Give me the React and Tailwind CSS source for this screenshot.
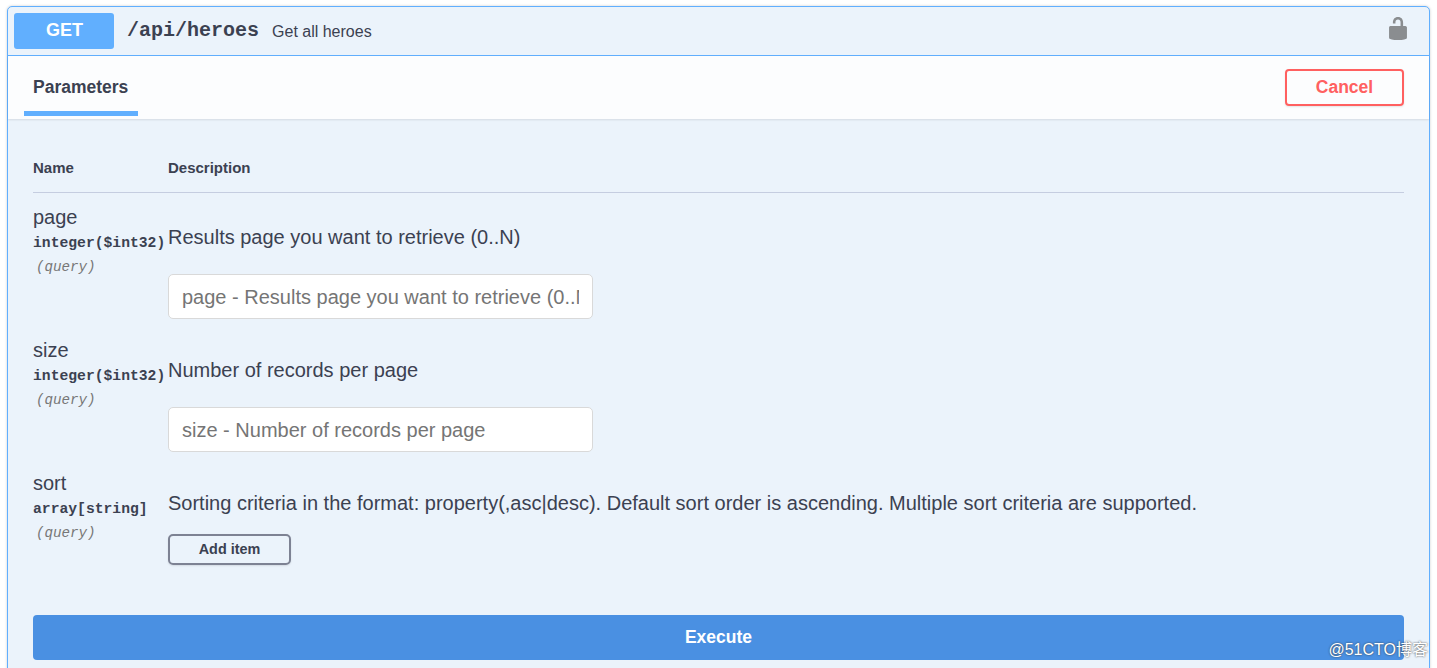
const sans = 'font-["Liberation_Sans",Arial,sans-serif]'

const params = [
  {
    name: 'page',
    type: 'integer($int32)',
    description: 'Results page you want to retrieve (0..N)',
    placeholder: 'page - Results page you want to retrieve (0..N)',
  },
  {
    name: 'size',
    type: 'integer($int32)',
    description: 'Number of records per page',
    placeholder: 'size - Number of records per page',
  },
  {
    name: 'sort',
    type: 'array[string]',
    description:
      'Sorting criteria in the format: property(,asc|desc). Default sort order is ascending. Multiple sort criteria are supported.',
  },
]

function LockIcon() {
  return (
    <svg viewBox="3 1 14 18" className="block h-[23px] w-[18px] fill-[#8a8d90]">
      <path d="M15.8 8H14V5.6C14 2.703 12.665 1 10 1 7.334 1 6 2.703 6 5.6V6h2v-.801C8 3.754 8.797 3 10 3c1.203 0 2 .754 2 2.199V8H4c-.553 0-1 .646-1 1.199V17c0 .549.428 1.139.951 1.307l1.197.387C5.672 18.861 6.55 19 7.1 19h5.8c.549 0 1.428-.139 1.951-.307l1.196-.387c.524-.167.953-.757.953-1.306V9.199C17 8.646 16.352 8 15.8 8z" />
    </svg>
  )
}

function ParamRow({ param }) {
  return (
    <div className="flex h-[133px] items-start">
      <div className="w-[135px] shrink-0 pt-[13px]">
        <p className="text-[20px] leading-[23px] text-[#3b4151]">{param.name}</p>
        <p className="mt-[6px] font-['Liberation_Mono',monospace] text-[14.7px] leading-[16px] font-bold whitespace-nowrap text-[#3b4151]">
          {param.type}
        </p>
        <p className="mt-[8px] pl-[3px] font-['Liberation_Mono',monospace] text-[14.2px] leading-[16px] font-normal text-[#777] italic">
          (query)
        </p>
      </div>
      <div className="min-w-0 flex-1 pt-[33px]">
        <p className="text-[20px] leading-[23px] whitespace-nowrap text-[#3b4151]">{param.description}</p>
        {param.placeholder ? (
          <input
            className="mt-[25px] block h-[45px] w-[425px] rounded-[5px] border border-[#d9d9d9] bg-white px-[13px] pt-[2px] text-[20px] outline-none placeholder:text-[#757575]"
            placeholder={param.placeholder}
          />
        ) : (
          <button className="mt-[19px] block h-[31px] w-[123px] rounded-[5px] border-2 border-[#7d8293] pt-[1px] text-[14.4px] font-bold text-[#3b4151] shadow-[0_1px_2px_rgba(0,0,0,0.1)]">
            Add item
          </button>
        )}
      </div>
    </div>
  )
}

export default function App() {
  return (
    <div className={`relative h-[668px] overflow-hidden bg-white pt-[6px] pr-[7px] pl-[7px] ${sans}`}>
      <div className="h-[700px] rounded-[5px] border border-[#61affe] bg-[#ebf3fb] shadow-[0_0_3px_rgba(0,0,0,0.19)]">
        <div className="flex h-[49px] items-center border-b border-[#61affe] pr-[22px] pl-[6px]">
          <span className="flex h-[36px] w-[100px] items-center justify-center rounded-[3px] bg-[#61affe] pb-[1px] pl-[1px] text-[18px] font-bold text-white">
            GET
          </span>
          <span className="ml-[13px] font-['Liberation_Mono',monospace] text-[20px] font-bold text-[#3b4151]">
            /api/heroes
          </span>
          <span className="ml-[13px] pt-[1px] text-[16px] text-[#3b4151]">Get all heroes</span>
          <span className="mb-[6px] ml-auto">
            <LockIcon />
          </span>
        </div>

        <div className="flex h-[63px] items-center justify-between bg-[#fcfdfe] pr-[25px] pl-[16px] shadow-[0_1px_2px_rgba(0,0,0,0.1)]">
          <span className="h-[60px] w-[114px] self-start border-b-[5px] border-[#61affe] pt-[7px] pl-[9px] text-[17.5px] leading-[48px] font-bold text-[#3b4151]">
            Parameters
          </span>
          <button className="h-[37px] w-[119px] rounded-[4px] border-2 border-[#ff6060] text-[17.5px] font-bold text-[#ff6060] shadow-[0_1px_2px_rgba(0,0,0,0.1)]">
            Cancel
          </button>
        </div>

        <div className="px-[25px]">
          <div className="mt-[27px] flex h-[47px] border-b border-[#c5cde0] pt-[14px] text-[15px] leading-[16px] font-bold text-[#3b4151]">
            <span className="w-[135px]">Name</span>
            <span>Description</span>
          </div>
          {params.map((param) => (
            <ParamRow key={param.name} param={param} />
          ))}
          <button className="mt-[23px] block h-[45px] w-full rounded-[4px] bg-[#4a90e2] text-[17.5px] font-bold text-white">
            Execute
          </button>
        </div>
      </div>
      <span className="absolute right-[9px] bottom-[8px] font-['Liberation_Sans','Noto_Sans_CJK_SC',sans-serif] text-[16px] leading-[20px] text-white [text-shadow:0_0_2px_#333]">
        @51CTO博客
      </span>
    </div>
  )
}
